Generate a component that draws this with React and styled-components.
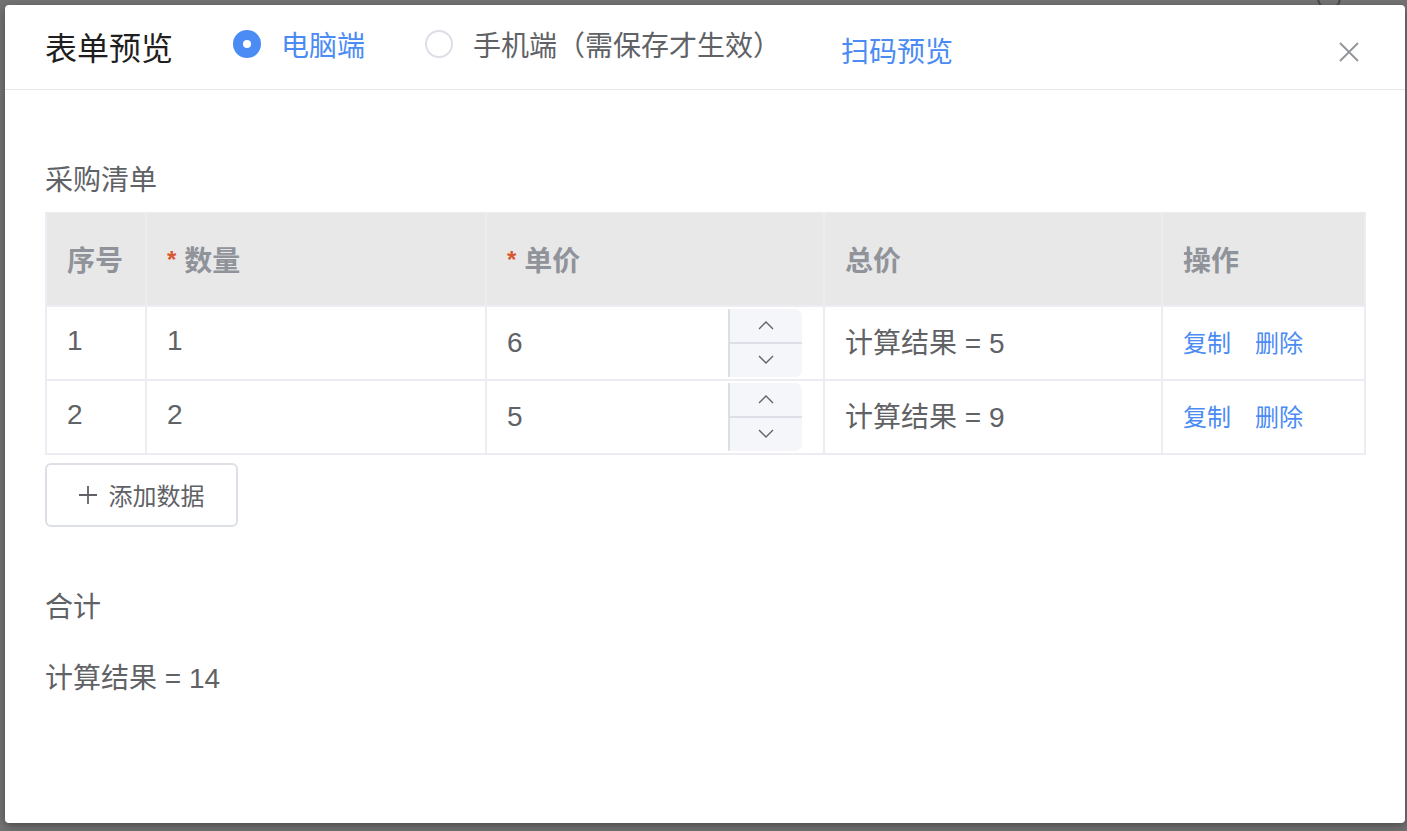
import React from "react";
import styled, { createGlobalStyle } from "styled-components";

const GlobalStyle = createGlobalStyle`
  html, body { margin: 0; padding: 0; }
  body {
    background: #737373;
    font-family: "Liberation Sans", "Noto Sans CJK SC", sans-serif;
  }
  * { box-sizing: border-box; }
`;

const Overlay = styled.div`
  width: 1407px;
  height: 831px;
  padding: 5px 2px 8px 5px;
  position: relative;
  overflow: hidden;
`;

const BehindIcon = styled.div`
  position: absolute;
  top: -14px;
  right: 66px;
  width: 24px;
  height: 24px;
  border: 2px solid #4a4a4a;
  border-radius: 50%;
`;

const Dialog = styled.div`
  position: relative;
  width: 1400px;
  height: 818px;
  background: #fff;
  border-radius: 4px;
  box-shadow: 0 3px 10px rgba(0, 0, 0, 0.35);
  display: flex;
  flex-direction: column;
`;

const Header = styled.div`
  display: flex;
  align-items: center;
  height: 85px;
  padding: 0 46px 0 40px;
  border-bottom: 1px solid #e6e6e6;
`;

const Title = styled.div`
  font-size: 32px;
  color: #1f1f1f;
  margin-right: 60px;
  margin-top: -2px;
`;

const RadioLabel = styled.label`
  display: flex;
  align-items: center;
  gap: 20px;
  font-size: 28px;
  color: ${(p) => (p.$checked ? "#4b8bf4" : "#606266")};
  margin-right: ${(p) => p.$mr}px;
  margin-top: -6px;
  cursor: pointer;
`;

const RadioCircle = styled.span`
  width: 28px;
  height: 28px;
  border-radius: 50%;
  border: ${(p) => (p.$checked ? "none" : "2px solid #dcdfe6")};
  background: ${(p) => (p.$checked ? "#4b8bf4" : "#fff")};
  display: flex;
  align-items: center;
  justify-content: center;
  &::after {
    content: "";
    width: 8px;
    height: 8px;
    border-radius: 50%;
    background: #fff;
    display: ${(p) => (p.$checked ? "block" : "none")};
  }
`;

const ScanLink = styled.a`
  font-size: 28px;
  color: #4b8bf4;
  text-decoration: none;
  margin-top: 6px;
  cursor: pointer;
`;

const CloseBtn = styled.button`
  margin-left: auto;
  border: none;
  background: none;
  padding: 0;
  width: 20px;
  height: 20px;
  display: flex;
  align-items: center;
  justify-content: center;
  cursor: pointer;
  margin-top: 10px;
`;

const Body = styled.div`
  padding: 71px 40px 0 40px;
  color: #606266;
`;

const SectionLabel = styled.div`
  font-size: 28px;
  line-height: 40px;
  color: #606266;
  margin-bottom: ${(p) => p.$mb || 0}px;
`;

const Table = styled.table`
  width: 1319px;
  border-collapse: collapse;
  table-layout: fixed;
  border: 1px solid #ebebf0;
`;

const Th = styled.th`
  height: 93px;
  background: #e8e8e9;
  border: 2px solid #ececf2;
  border-top: none;
  text-align: left;
  padding: 0 0 0 20px;
  font-size: 28px;
  font-weight: 700;
  color: #909399;
`;

const Star = styled.span`
  color: #d9562f;
  font-size: 24px;
  margin-right: 8px;
  position: relative;
  top: -3px;
`;

const Td = styled.td`
  height: 74px;
  border: 2px solid #ececf2;
  padding: ${(p) => (p.$flush ? "2px 21px 2px 0" : "0 0 3px 20px")};
  font-size: 28px;
  color: #606266;
  vertical-align: middle;
`;

const NumberInput = styled.div`
  display: flex;
  height: 68px;
  align-items: stretch;
`;

const NumberValue = styled.div`
  flex: 1;
  display: flex;
  align-items: center;
  padding-left: 20px;
`;

const Controls = styled.div`
  width: 74px;
  display: flex;
  flex-direction: column;
  background: #f5f6fa;
  border-left: 2px solid #dcdfe6;
  border-radius: 0 7px 7px 0;
  overflow: hidden;
`;

const Step = styled.div`
  flex: 1;
  display: flex;
  align-items: center;
  justify-content: center;
  border-top: ${(p) => (p.$bottom ? "2px solid #dcdfe6" : "none")};
`;

const OpLink = styled.a`
  font-size: 24px;
  color: #4b8bf4;
  margin-right: 24px;
  cursor: pointer;
`;

const AddButton = styled.button`
  margin-top: 8px;
  width: 193px;
  height: 64px;
  border: 2px solid #dcdfe6;
  border-radius: 6px;
  background: #fff;
  display: flex;
  align-items: center;
  justify-content: center;
  gap: 12px;
  font-family: inherit;
  font-size: 24px;
  color: #606266;
  cursor: pointer;
  margin-bottom: 61px;
`;

const Chevron = ({ up }) => (
  <svg width="16" height="10" viewBox="0 0 16 10">
    <path
      d={up ? "M1 9 L8 2 L15 9" : "M1 1 L8 8 L15 1"}
      fill="none"
      stroke="#606266"
      strokeWidth="1.4"
    />
  </svg>
);

const rows = [
  { id: 1, qty: 1, price: 6, total: 5 },
  { id: 2, qty: 2, price: 5, total: 9 },
];

export default function App() {
  return (
    <>
      <GlobalStyle />
      <Overlay>
        <BehindIcon />
        <Dialog>
          <Header>
            <Title>表单预览</Title>
            <RadioLabel $checked $mr={60}>
              <RadioCircle $checked />
              电脑端
            </RadioLabel>
            <RadioLabel $mr={60}>
              <RadioCircle />
              手机端（需保存才生效）
            </RadioLabel>
            <ScanLink>扫码预览</ScanLink>
            <CloseBtn aria-label="close">
              <svg width="20" height="20" viewBox="0 0 20 20">
                <path d="M1 1 L19 19 M19 1 L1 19" stroke="#909399" strokeWidth="1.8" />
              </svg>
            </CloseBtn>
          </Header>
          <Body>
            <SectionLabel $mb={11}>采购清单</SectionLabel>
            <Table>
              <colgroup>
                <col style={{ width: 100 }} />
                <col style={{ width: 340 }} />
                <col style={{ width: 338 }} />
                <col style={{ width: 338 }} />
                <col style={{ width: 203 }} />
              </colgroup>
              <thead>
                <tr>
                  <Th>序号</Th>
                  <Th>
                    <Star>*</Star>数量
                  </Th>
                  <Th>
                    <Star>*</Star>单价
                  </Th>
                  <Th>总价</Th>
                  <Th>操作</Th>
                </tr>
              </thead>
              <tbody>
                {rows.map((r) => (
                  <tr key={r.id}>
                    <Td>{r.id}</Td>
                    <Td>{r.qty}</Td>
                    <Td $flush>
                      <NumberInput>
                        <NumberValue>{r.price}</NumberValue>
                        <Controls>
                          <Step>
                            <Chevron up />
                          </Step>
                          <Step $bottom>
                            <Chevron />
                          </Step>
                        </Controls>
                      </NumberInput>
                    </Td>
                    <Td>计算结果 = {r.total}</Td>
                    <Td>
                      <OpLink>复制</OpLink>
                      <OpLink>删除</OpLink>
                    </Td>
                  </tr>
                ))}
              </tbody>
            </Table>
            <AddButton>
              <svg width="18" height="18" viewBox="0 0 18 18">
                <path d="M9 0 V18 M0 9 H18" stroke="#606266" strokeWidth="1.8" />
              </svg>
              添加数据
            </AddButton>
            <SectionLabel $mb={31}>合计</SectionLabel>
            <SectionLabel>计算结果 = 14</SectionLabel>
          </Body>
        </Dialog>
      </Overlay>
    </>
  );
}
